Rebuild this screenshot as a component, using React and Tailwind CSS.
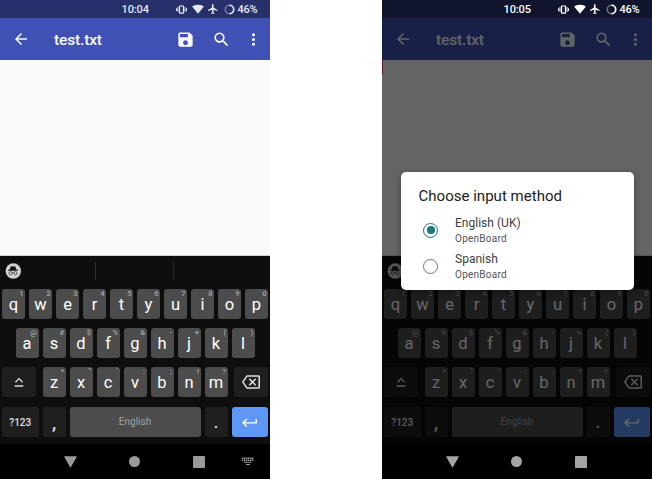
import React from 'react';

const ROW_ONE = [['q', '1'], ['w', '2'], ['e', '3'], ['r', '4'], ['t', '5'], ['y', '6'], ['u', '7'], ['i', '8'], ['o', '9'], ['p', '0']];
const ROW_TWO = [['a', '@'], ['s', '#'], ['d', '$'], ['f', '%'], ['g', '&'], ['h', '-'], ['j', '+'], ['k', '('], ['l', ')']];
const ROW_THREE = [['z', '*'], ['x', '"'], ['c', "'"], ['v', ':'], ['b', ';'], ['n', '!'], ['m', '?']];

function Icon({ d, className }) {
  return (
    <svg viewBox="0 0 24 24" fill="currentColor" className={`shrink-0 ${className}`}>
      <path d={d} />
    </svg>
  );
}

const PATHS = {
  back: 'M20 11H7.83l5.59-5.59L12 4l-8 8 8 8 1.41-1.41L7.83 13H20v-2z',
  save: 'M17 3H5c-1.11 0-2 .9-2 2v14c0 1.1.89 2 2 2h14c1.1 0 2-.9 2-2V7l-4-4zm-5 16c-1.66 0-3-1.34-3-3s1.34-3 3-3 3 1.34 3 3-1.34 3-3 3zm3-10H5V5h10v4z',
  search: 'M15.5 14h-.79l-.28-.27A6.47 6.47 0 0 0 16 9.5 6.5 6.5 0 1 0 9.5 16c1.61 0 3.09-.59 4.23-1.57l.27.28v.79l5 4.99L20.49 19l-4.99-5zm-6 0C7.01 14 5 11.99 5 9.5S7.01 5 9.5 5 14 7.01 14 9.5 11.99 14 9.5 14z',
  more: 'M12 8c1.1 0 2-.9 2-2s-.9-2-2-2-2 .9-2 2 .9 2 2 2zm0 2c-1.1 0-2 .9-2 2s.9 2 2 2 2-.9 2-2-.9-2-2-2zm0 6c-1.1 0-2 .9-2 2s.9 2 2 2 2-.9 2-2-.9-2-2-2z',
  vibrate: 'M0 15h2.300V9H0v6zm3.300 2.500h2V6.500h-2v11zM21.700 9v6H24V9h-2.300zm-3 8.500h2V6.500h-2v11zM16 3H8c-.9 0-1.600.7-1.600 1.600v14.800c0 .9.700 1.600 1.600 1.600h8c.9 0 1.600-.7 1.600-1.600V4.600C17.600 3.700 16.900 3 16 3zM15 18.300H9V5.700h6v12.600z',
  wifi: 'M12 21.500L.2 7.200C.9 6.600 5 3.500 12 3.500s11.100 3.100 11.800 3.700L12 21.500z',
  plane: 'M21 16v-2l-8-5V3.500c0-.83-.67-1.500-1.500-1.500S10 2.670 10 3.500V9l-8 5v2l8-2.500V19l-2 1.500V22l3.500-1 3.500 1v-1.500L13 19v-5.500l8 2.500z',
  shift: 'M12 8.410L16.590 13 18 11.590l-6-6-6 6L7.410 13 12 8.410zM5.500 17h13v2.200h-13z',
  backspace: 'M22 3H7c-.69 0-1.230.35-1.590.88L0 12l5.410 8.110c.36.53.9.89 1.590.89h15c1.100 0 2-.9 2-2V5c0-1.100-.9-2-2-2zm0 16H7.070L2.400 12l4.660-7H22v14zm-11.590-2L14 13.410 17.590 17 19 15.590 15.410 12 19 8.410 17.590 7 14 10.590 10.410 7 9 8.410 12.590 12 9 15.590 10.410 17z',
  enter: 'M20.500 7v4.500H5.330l3.580-3.590L7.500 6.500l-6 6 6 6 1.410-1.410L5.330 13.500H22.500V7h-2z',
};

function StatusBar({ time, dimmed }) {
  return (
    <div className={`flex h-[18px] items-center text-[11px] leading-[19px] ${dimmed ? 'bg-[#10142d] text-white' : 'bg-[#27306b] text-[#e6e7ee]'}`}>
      <span className="ml-[121.500px] w-[54px] pt-[1px] font-medium tracking-[-0.100px]">{time}</span>
      <Icon d={PATHS.vibrate} className="h-[11px] w-[11px]" />
      <Icon d={PATHS.wifi} className="ml-[5px] h-[12px] w-[12px]" />
      <Icon d={PATHS.plane} className="ml-[3px] h-[12px] w-[12px]" />
      <svg viewBox="0 0 12 12" fill="none" stroke="currentColor" strokeWidth="1.700" className="ml-[5px] h-[11px] w-[11px] shrink-0">
        <circle cx="6" cy="6" r="4.600" opacity=".4" />
        <path d="M6 1.400a4.600 4.600 0 0 1 0 9.200" />
      </svg>
      <span className="ml-[3px] pt-[1px] font-medium tracking-[-0.200px]">46%</span>
    </div>
  );
}

function Toolbar() {
  return (
    <div className="flex h-[42px] items-center bg-[#3f51b5] text-[#fafafa]">
      <Icon d={PATHS.back} className="ml-[12px] h-[18px] w-[18px]" />
      <h1 className="ml-[24px] w-[122px] pt-[1px] text-[15.500px] font-medium leading-[20px] tracking-[-0.150px]">test.txt</h1>
      <Icon d={PATHS.save} className="h-[19px] w-[19px]" />
      <Icon d={PATHS.search} className="ml-[17px] h-[19px] w-[19px]" />
      <Icon d={PATHS.more} className="ml-[13px] h-[19px] w-[19px]" />
    </div>
  );
}

function LetterKey({ letter, hint }) {
  return (
    <div className="relative h-[30px] w-[23px] shrink-0 rounded-[3px] bg-[#4c4c4c] text-center text-[16.500px] leading-[31px] text-white">
      {letter}
      <span className="absolute right-[1.500px] top-0 text-[7.500px] font-medium leading-[9px] text-[#a8a8a8]">{hint}</span>
    </div>
  );
}

function Letters({ keys }) {
  return (
    <div className="flex gap-[4px]">
      {keys.map(([letter, hint]) => <LetterKey key={letter} letter={letter} hint={hint} />)}
    </div>
  );
}

function DarkKey({ className, children }) {
  return (
    <div className={`flex h-[30px] shrink-0 items-center justify-center rounded-[3px] bg-[#1f1f1f] text-[#e0e0e0] ${className}`}>
      {children}
    </div>
  );
}

function Incognito() {
  return (
    <svg viewBox="0 0 16 16" className="ml-[5px] h-[16px] w-[16px]">
      <circle cx="8.300" cy="8" r="7.700" fill="#d2d2d2" />
      <path d="M5.600 3.500 7 3.300l1 .4 1-.4 1.400.2.800 3H4.800zM3.300 6.600h9.400v1.100H3.300z" fill="#151515" />
      <g fill="none" stroke="#444" strokeWidth=".8">
        <circle cx="5.600" cy="10.200" r="1.600" />
        <circle cx="10.400" cy="10.200" r="1.600" />
        <path d="M7.200 10q.8-.6 1.600 0" />
      </g>
    </svg>
  );
}

function Keyboard() {
  return (
    <div className="h-[188px] bg-[#0e0e0e]">
      <div className="flex h-[33px] items-start pt-[6px]">
        <div className="w-[95px] pt-[1px]"><Incognito /></div>
        <div className="h-[18px] w-px bg-[#2b2b2b]" />
        <div className="ml-[77px] h-[18px] w-px bg-[#2b2b2b]" />
      </div>
      <div className="flex flex-col">
        <div className="mb-[9px] pl-[2px]"><Letters keys={ROW_ONE} /></div>
        <div className="mb-[9px] pl-[15.500px]"><Letters keys={ROW_TWO} /></div>
        <div className="mb-[10px] flex pl-[2px]">
          <DarkKey className="mr-[6.500px] w-[34px]"><Icon d={PATHS.shift} className="h-[16px] w-[16px]" /></DarkKey>
          <Letters keys={ROW_THREE} />
          <DarkKey className="ml-[6.500px] w-[34px]"><Icon d={PATHS.backspace} className="h-[18px] w-[18px]" /></DarkKey>
        </div>
        <div className="flex gap-[4px] pl-[2px]">
          <DarkKey className="w-[36.500px] text-[10px] font-medium">?123</DarkKey>
          <DarkKey className="w-[23px] pt-[3px] text-[17px] font-bold">,</DarkKey>
          <div className="h-[30px] w-[131px] rounded-[3px] bg-[#4c4c4c] text-center text-[10px] leading-[30px] text-[#a3a3a3]">English</div>
          <DarkKey className="w-[23px] pt-[2px] text-[16px] font-medium">.</DarkKey>
          <div className="flex h-[30px] w-[36.500px] items-center justify-center rounded-[3px] bg-[#5e97f6] text-white">
            <Icon d={PATHS.enter} className="h-[17px] w-[17px]" />
          </div>
        </div>
      </div>
    </div>
  );
}

function NavBar({ dimmed }) {
  return (
    <div className={`flex h-[35px] items-center bg-black ${dimmed ? 'text-[#a3a3a3]' : 'text-[#999999]'}`}>
      <svg viewBox="0 0 13 12" fill="currentColor" className="ml-[64px] h-[12px] w-[13px]">
        <path d="M.6.300h11.800q.6 0 .3.600L7 11q-.5.800-1 0L.3.900Q0 .3.600.3z" />
      </svg>
      <div className="ml-[52px] h-[11px] w-[11px] rounded-full bg-current" />
      <div className="ml-[53px] h-[12px] w-[12px] rounded-[1px] bg-current" />
      {!dimmed && (
        <svg viewBox="0 0 12 9" fill="currentColor" className="ml-[37px] h-[9px] w-[12px]">
          <path d="M0 .5h1.500V2H0zM2 .5h1.500V2H2zM4 .5h1.500V2H4zM6 .5h1.500V2H6zM8 .5h1.500V2H8zM10 .5h1.500V2H10zM0 2.600h1.500v1.500H0zM2 2.600h1.500v1.500H2zM4 2.600h1.500v1.500H4zM6 2.600h1.500v1.500H6zM8 2.600h1.500v1.500H8zM10 2.600h1.500v1.500H10zM2 4.700h7.500v1H2zM4 7h4v1H4z" />
        </svg>
      )}
    </div>
  );
}

function Option({ label, checked }) {
  return (
    <div className="flex h-[36px] items-center">
      <div className={`flex h-[15px] w-[15px] items-center justify-center rounded-full border-[1.500px] ${checked ? 'border-[#16797c]' : 'border-[#757575]'}`}>
        {checked && <div className="h-[8px] w-[8px] rounded-full bg-[#16797c]" />}
      </div>
      <div className="ml-[17px]">
        <div className="text-[12px] leading-[16px] tracking-[0.020px] text-[#404040]">{label}</div>
        <div className="pt-[1px] text-[10px] leading-[14px] tracking-[0.250px] text-[#555555]">OpenBoard</div>
      </div>
    </div>
  );
}

function InputMethodDialog() {
  return (
    <div className="absolute left-[18.500px] top-[172px] h-[118px] w-[233px] rounded-[5px] bg-white shadow-[0_2px_7px_rgba(0,0,0,0.350)]">
      <h2 className="pl-[18px] pt-[14px] text-[15px] leading-[20px] tracking-[0.020px] text-[#212121]">Choose input method</h2>
      <div className="pl-[22.500px] pt-[6px]">
        <Option label="English (UK)" checked />
        <Option label="Spanish" />
      </div>
    </div>
  );
}

function Phone({ time, dialog }) {
  return (
    <div className="relative h-[479px] w-[270px] shrink-0 overflow-hidden">
      <StatusBar time={time} dimmed={dialog} />
      <div className="relative">
        <Toolbar />
        <div className="h-[196px] border-b border-[#cbd5d1] bg-[#fafafa]">
          {dialog && <div className="h-[14px] w-px bg-[#ff2870]" />}
        </div>
        <Keyboard />
        {dialog && <div className="absolute inset-0 bg-black/60" />}
      </div>
      <NavBar dimmed={dialog} />
      {dialog && <InputMethodDialog />}
    </div>
  );
}

export default function App() {
  return (
    <div className="flex h-[479px] w-[652px] gap-[112px] overflow-hidden bg-white font-['Roboto',sans-serif]">
      <Phone time="10:04" />
      <Phone time="10:05" dialog />
    </div>
  );
}
